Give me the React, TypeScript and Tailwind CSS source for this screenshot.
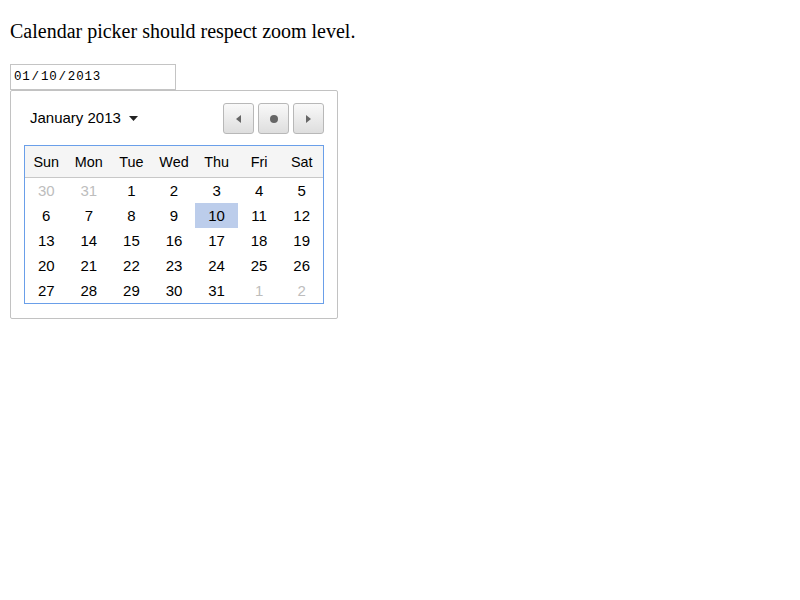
import { ReactNode } from 'react'

const weekDays = ['Sun', 'Mon', 'Tue', 'Wed', 'Thu', 'Fri', 'Sat']

// 5 rows shown, leading and trailing days of other months are greyed
const weeks: { day: number; other?: boolean }[][] = [
	[{ day: 30, other: true }, { day: 31, other: true }, { day: 1 }, { day: 2 }, { day: 3 }, { day: 4 }, { day: 5 }],
	[{ day: 6 }, { day: 7 }, { day: 8 }, { day: 9 }, { day: 10 }, { day: 11 }, { day: 12 }],
	[{ day: 13 }, { day: 14 }, { day: 15 }, { day: 16 }, { day: 17 }, { day: 18 }, { day: 19 }],
	[{ day: 20 }, { day: 21 }, { day: 22 }, { day: 23 }, { day: 24 }, { day: 25 }, { day: 26 }],
	[{ day: 27 }, { day: 28 }, { day: 29 }, { day: 30 }, { day: 31 }, { day: 1, other: true }, { day: 2, other: true }],
]

const selectedDay = 10

const NavButton = ({ children }: { children: ReactNode }) => (
	<button
		type="button"
		className="w-[31px] h-[31px] flex items-center justify-center rounded-[3px] border border-[#b8b8b8] bg-gradient-to-b from-[#f9f9f9] to-[#dedede]"
	>
		{children}
	</button>
)

export default function App() {
	return (
		<div className="min-h-screen bg-white pl-[10px] font-['Liberation_Serif',serif]">
			<p className="pt-[20px] text-[20px] leading-[23px] text-black">
				Calendar picker should respect zoom level.
			</p>

			{/* date input */}
			<div className="mt-[21px] w-[166px] h-[26px] border border-[#c4c4c4] flex items-center pl-[3px] font-['Liberation_Mono',monospace] text-[12.5px] tracking-[0.8px] text-black">
				01<span className="px-[1px]">/</span>10<span className="px-[1px]">/</span>2013
			</div>

			{/* popup */}
			<div className="w-[328px] h-[229px] border border-[#c2c2c2] rounded-[2px] px-[13px] pt-[12px] font-['Liberation_Sans',Arial,sans-serif] text-black">
				<div className="flex items-center justify-between h-[31px]">
					<div className="flex items-center pl-[6px] text-[15px]">
						January 2013
						<svg className="ml-[8px]" width="9" height="5" viewBox="0 0 9 5">
							<path d="M0 0h9L4.5 5z" fill="#222" />
						</svg>
					</div>
					<div className="flex gap-[4px]">
						<NavButton>
							<svg width="5" height="8" viewBox="0 0 5 8">
								<path d="M5 0v8L0 4z" fill="#666" />
							</svg>
						</NavButton>
						<NavButton>
							<div className="w-[8px] h-[8px] rounded-full bg-[#666]" />
						</NavButton>
						<NavButton>
							<svg width="5" height="8" viewBox="0 0 5 8">
								<path d="M0 0v8L5 4z" fill="#666" />
							</svg>
						</NavButton>
					</div>
				</div>

				<div className="mt-[11px] w-[300px] border border-[#6a9fe9]">
					<div className="grid grid-cols-7 h-[32px] pt-[2px] bg-[#f5f5f5] border-b border-[#c8c8c8] text-[14.4px] items-center">
						{weekDays.map((d) => (
							<div key={d} className="text-center">
								{d}
							</div>
						))}
					</div>
					{weeks.map((week, i) => (
						<div key={i} className="grid grid-cols-7 h-[25px] text-[15px]">
							{week.map((c, j) => (
								<div
									key={j}
									className={`flex items-center justify-center pt-px ${
										c.other ? 'text-[#bdbdbd]' : 'text-black'
									} ${!c.other && c.day === selectedDay ? 'bg-[#bccdeb]' : ''}`}
								>
									{c.day}
								</div>
							))}
						</div>
					))}
				</div>
			</div>
		</div>
	)
}
